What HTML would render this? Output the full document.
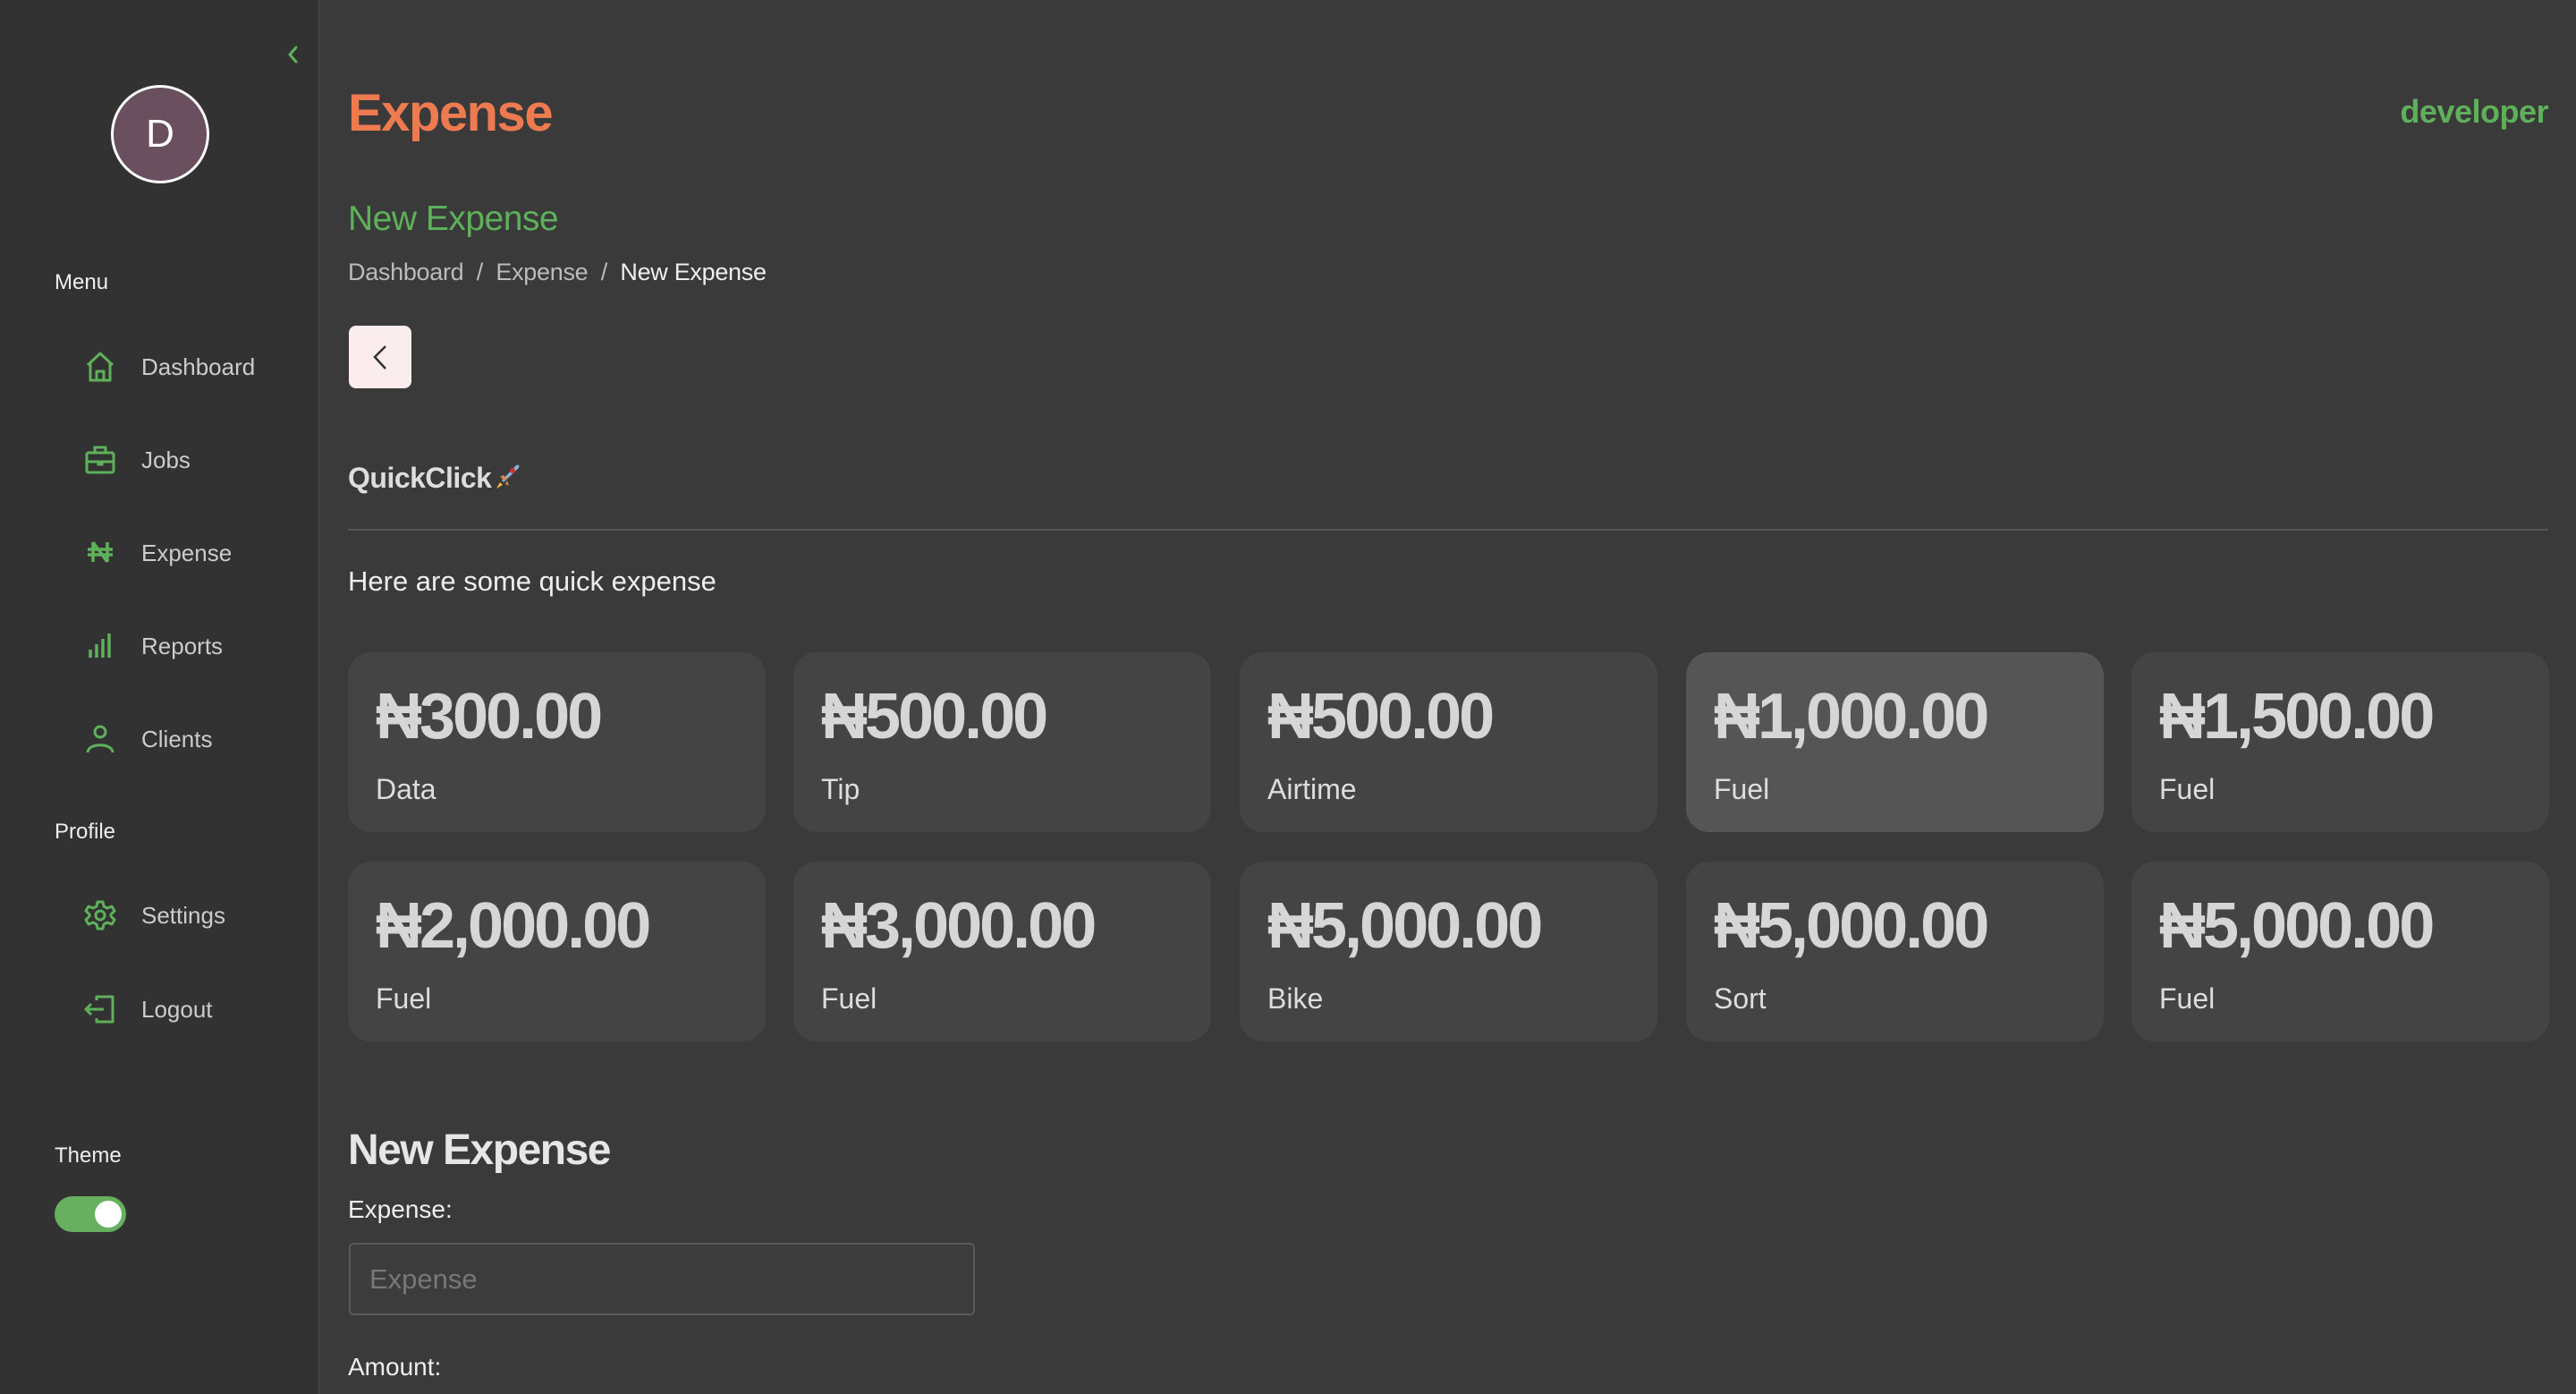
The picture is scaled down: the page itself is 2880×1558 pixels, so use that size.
<!DOCTYPE html>
<html><head><meta charset="utf-8"><style>
*{margin:0;padding:0;box-sizing:border-box}
body{width:2880px;height:1558px;background:#3a3a3a;font-family:"Liberation Sans",sans-serif;color:#ddd;position:relative;overflow:hidden}
.a{position:absolute;white-space:nowrap}
#side{position:absolute;left:0;top:0;width:358px;height:1558px;background:#323232;border-right:2px solid #444}
.nav{position:absolute;left:158px;font-size:26px;color:#ccc;line-height:40px}
.ic{position:absolute;left:92px;width:40px;height:40px}
.lbl{position:absolute;left:61px;font-size:24px;color:#eee;line-height:30px}
.card{position:absolute;width:467px;height:201px;background:#444;border-radius:26px}
.card .amt{position:absolute;left:31px;top:34px;font-size:72px;font-weight:bold;letter-spacing:-3px;color:#d6d6d6;line-height:76px}
.card .nm{position:absolute;left:31px;top:133px;font-size:32px;color:#ddd;line-height:40px}
</style></head><body>
<div id="side">
  <svg class="a" style="left:317px;top:49px" width="20" height="24" viewBox="0 0 20 24"><path d="M14 4 L7 12 L14 20" stroke="#5fb05a" stroke-width="3" fill="none" stroke-linecap="round"/></svg>
  <div class="a" style="left:124px;top:95px;width:110px;height:110px;border-radius:50%;background:#6a4f5e;border:3px solid #fff;color:#fff;font-size:44px;text-align:center;line-height:104px">D</div>
  <div class="lbl" style="top:301px">Menu</div>
  <svg class="ic" style="top:390px" viewBox="0 0 40 40" fill="none" stroke="#5fb05a" stroke-width="3" stroke-linejoin="round"><path d="M6 18 L20 5 L34 18 M9 15 V35 H31 V15 M16 35 V25 H24 V35"/></svg>
  <div class="nav" style="top:390px">Dashboard</div>
  <svg class="ic" style="top:494px" viewBox="0 0 40 40" fill="none" stroke="#5fb05a" stroke-width="3"><rect x="5" y="12" width="30" height="22" rx="2"/><path d="M14 12 V6 H26 V12 M5 22 H35 M18 21 V25 H22 V21"/></svg>
  <div class="nav" style="top:494px">Jobs</div>
  <svg class="ic" style="top:597px" viewBox="0 0 40 40" fill="none" stroke="#5fb05a" stroke-width="3.5"><path d="M12 9 V31 M28 9 V31 M12 9 L28 31 M6 17 H34 M6 23 H34"/></svg>
  <div class="nav" style="top:598px">Expense</div>
  <svg class="ic" style="top:702px" viewBox="0 0 40 40" fill="none" stroke="#5fb05a" stroke-width="3.5"><path d="M9 24 V33 M16 18 V33 M23 12 V33 M30 6 V33"/></svg>
  <div class="nav" style="top:702px">Reports</div>
  <svg class="ic" style="top:806px" viewBox="0 0 40 40" fill="none" stroke="#5fb05a" stroke-width="3"><circle cx="20" cy="12" r="6"/><path d="M6 35 C6 24 34 24 34 35"/></svg>
  <div class="nav" style="top:806px">Clients</div>
  <div class="lbl" style="top:915px">Profile</div>
  <svg class="ic" style="top:1003px" viewBox="0 0 40 40" fill="none" stroke="#5fb05a" stroke-width="3" stroke-linejoin="round"><circle cx="20" cy="20" r="5"/><path d="M17 5 H23 L24 10 L28 12 L33 10 L36 15 L32 19 V21 L36 25 L33 30 L28 28 L24 30 L23 35 H17 L16 30 L12 28 L7 30 L4 25 L8 21 V19 L4 15 L7 10 L12 12 L16 10 Z"/></svg>
  <div class="nav" style="top:1003px">Settings</div>
  <svg class="ic" style="top:1108px" viewBox="0 0 40 40" fill="none" stroke="#5fb05a" stroke-width="3" stroke-linejoin="round"><path d="M16 10 V6 H34 V34 H16 V30 M4 20 H24 M10 14 L4 20 L10 26"/></svg>
  <div class="nav" style="top:1108px">Logout</div>
  <div class="lbl" style="top:1277px">Theme</div>
  <div class="a" style="left:61px;top:1337px;width:80px;height:40px;border-radius:20px;background:#66b05f"><div style="position:absolute;right:5px;top:5px;width:30px;height:30px;border-radius:50%;background:#fff"></div></div>
</div>

<div class="a" style="left:389px;top:90px;font-size:58px;font-weight:bold;color:#ee7b50;line-height:74px;letter-spacing:-1.5px">Expense</div>
<div class="a" style="right:31px;top:102px;font-size:36px;font-weight:bold;color:#5fb05a;line-height:46px;letter-spacing:-0.5px">developer</div>
<div class="a" style="left:389px;top:221px;font-size:39px;color:#5fb05a;line-height:48px;letter-spacing:-0.5px">New Expense</div>
<div class="a" style="left:389px;top:287px;font-size:27px;color:#bbb;line-height:34px;letter-spacing:-0.3px">Dashboard&nbsp; / &nbsp;Expense&nbsp; / &nbsp;<span style="color:#eee">New Expense</span></div>
<div class="a" style="left:390px;top:364px;width:70px;height:70px;border-radius:8px;background:#fbeced"><svg width="70" height="70" viewBox="0 0 70 70"><path d="M41 23 L29 35 L41 48" stroke="#333" stroke-width="2.5" fill="none"/></svg></div>
<div class="a" style="left:389px;top:514px;font-size:32px;font-weight:bold;color:#ddd;line-height:40px;letter-spacing:-0.5px">QuickClick<svg width="34" height="34" viewBox="0 0 34 34" style="vertical-align:-4px"><path d="M12 22 L28 5 C31 4 32 5 31 8 L14 24 Z" fill="#8ab0d8"/><circle cx="24" cy="11" r="3" fill="#c33"/><path d="M10 18 L14 16 L18 20 L15 22Z M16 26 L18 22 L20 28Z" fill="#d84"/><path d="M10 24 L6 31 L13 27Z" fill="#f5b830"/></svg></div>
<div class="a" style="left:389px;top:591px;width:2460px;height:2px;background:#555"></div>
<div class="a" style="left:389px;top:631px;font-size:31px;color:#eee;line-height:38px">Here are some quick expense</div>

<div class="card" style="left:389px;top:729px"><div class="amt">₦300.00</div><div class="nm">Data</div></div>
<div class="card" style="left:887px;top:729px"><div class="amt">₦500.00</div><div class="nm">Tip</div></div>
<div class="card" style="left:1386px;top:729px"><div class="amt">₦500.00</div><div class="nm">Airtime</div></div>
<div class="card" style="left:1885px;top:729px;background:#555"><div class="amt">₦1,000.00</div><div class="nm">Fuel</div></div>
<div class="card" style="left:2383px;top:729px"><div class="amt">₦1,500.00</div><div class="nm">Fuel</div></div>
<div class="card" style="left:389px;top:963px"><div class="amt">₦2,000.00</div><div class="nm">Fuel</div></div>
<div class="card" style="left:887px;top:963px"><div class="amt">₦3,000.00</div><div class="nm">Fuel</div></div>
<div class="card" style="left:1386px;top:963px"><div class="amt">₦5,000.00</div><div class="nm">Bike</div></div>
<div class="card" style="left:1885px;top:963px"><div class="amt">₦5,000.00</div><div class="nm">Sort</div></div>
<div class="card" style="left:2383px;top:963px"><div class="amt">₦5,000.00</div><div class="nm">Fuel</div></div>

<div class="a" style="left:389px;top:1256px;font-size:48px;font-weight:bold;color:#e6e6e6;line-height:60px;letter-spacing:-1.5px">New Expense</div>
<div class="a" style="left:389px;top:1335px;font-size:28px;color:#eee;line-height:34px">Expense:</div>
<div class="a" style="left:390px;top:1389px;width:700px;height:81px;border:2px solid #5a5a5a;border-radius:5px;background:#3c3c3c"><div style="position:absolute;left:21px;top:20px;font-size:31px;color:#777;line-height:38px">Expense</div></div>
<div class="a" style="left:389px;top:1511px;font-size:28px;color:#eee;line-height:34px">Amount:</div>
</body></html>
